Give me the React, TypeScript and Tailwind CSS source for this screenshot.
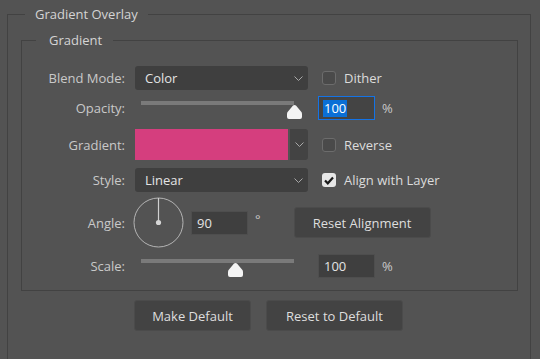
import React from 'react';

const font = { fontFamily: '"Open Sans", "Noto Sans", sans-serif' };

function Chevron() {
  return (
    <svg width="9" height="5" viewBox="0 0 9 5" className="shrink-0">
      <path d="M0.5 0.5 L4.5 4.5 L8.5 0.5" fill="none" stroke="#a8a8a8" strokeWidth="1" />
    </svg>
  );
}

function Thumb() {
  return (
    <svg width="15" height="14" viewBox="0 0 15 14">
      <path
        d="M7.5 0 C8.6 0 9.3 0.8 10 1.8 L14 6.6 Q15 7.6 15 9 L15 12 Q15 14 13 14 L2 14 Q0 14 0 12 L0 9 Q0 7.6 1 6.6 L5 1.8 C5.7 0.8 6.4 0 7.5 0Z"
        fill="#f4f4f4"
      />
    </svg>
  );
}

function Checkbox({ checked }: { checked?: boolean }) {
  return checked ? (
    <span className="flex h-[14px] w-[14px] items-center justify-center rounded-[3px] bg-[#e6e6e6]">
      <svg width="10" height="9" viewBox="0 0 10 9">
        <path d="M1 4.5 L3.8 7.3 L9 1.5" fill="none" stroke="#1a1a1a" strokeWidth="2.2" />
      </svg>
    </span>
  ) : (
    <span className="block h-[14px] w-[14px] rounded-[3px] border border-[#6c6c6c] bg-[#4a4a4a]" />
  );
}

function Label({ children }: { children: React.ReactNode }) {
  return <div className="w-[103px] shrink-0 text-right text-[#c9c9c9]">{children}</div>;
}

function Select({ value }: { value: string }) {
  return (
    <div className="flex h-[24px] w-[173px] items-center justify-between rounded-[3px] bg-[#3f3f3f] pl-[10px] pr-[5px] text-[#e4e4e4]">
      <span>{value}</span>
      <Chevron />
    </div>
  );
}

function Slider({ pos }: { pos: number }) {
  return (
    <div className="relative h-[24px] w-[173px]">
      <div className="ml-[6px] mt-[5px] h-[4px] w-[153px] bg-[#7a7a7a]" />
      <div className="absolute top-[9px]" style={{ left: pos - 7 }}>
        <Thumb />
      </div>
    </div>
  );
}

function NumBox({ value, focused }: { value: string; focused?: boolean }) {
  return (
    <div
      className={
        focused
          ? 'flex h-[24px] w-[57px] items-center border border-[#1473e6] bg-[#444444] pl-[4px]'
          : 'flex h-[24px] w-[57px] items-center border border-[#4e4e4e] bg-[#3f3f3f] pl-[5px]'
      }
    >
      <span className={focused ? 'bg-[#0a6fd6] px-[1px] leading-[17px] text-white' : 'text-[#e4e4e4]'}>{value}</span>
    </div>
  );
}

function Button({ children, w }: { children: React.ReactNode; w: string }) {
  return (
    <div
      className={`flex h-[31px] items-center justify-center rounded-[3px] border border-[#4b4b4b] bg-[#434343] text-[#dedede] ${w}`}
    >
      {children}
    </div>
  );
}

export default function App() {
  return (
    <div className="h-[359px] w-[540px] overflow-hidden bg-[#535353] text-[13px] leading-[18px]" style={font}>
      <fieldset className="ml-[7px] mt-[5px] h-[400px] w-[524px] border border-[#424242] pl-[13px] pt-[8px]">
        <legend className="ml-[4px] px-[10px] text-[#d4d4d4]">Gradient Overlay</legend>

        <fieldset className="w-[497px] border border-[#424242] pb-[12px] pt-[17px]">
          <legend className="ml-[14px] pl-[13px] pr-[11px] text-[#d4d4d4]">Gradient</legend>

          <div className="flex flex-col">
            <div className="flex h-[24px] items-center gap-[10px]">
              <Label>Blend Mode:</Label>
              <Select value="Color" />
              <div className="ml-[4px] flex items-center gap-[8px] text-[#dcdcdc]">
                <Checkbox />
                <span>Dither</span>
              </div>
            </div>

            <div className="mt-[6px] flex h-[24px] items-center gap-[10px]">
              <Label>Opacity:</Label>
              <Slider pos={159} />
              <NumBox value="100" focused />
              <span className="ml-[-3px] text-[#c9c9c9]">%</span>
            </div>

            <div className="mt-[9px] flex h-[31px] items-center gap-[10px]">
              <Label>Gradient:</Label>
              <div className="flex h-[31px] w-[173px] gap-[2px]">
                <div className="h-full w-[153px] bg-[#d53e7e]" />
                <div className="flex h-full w-[18px] items-center justify-center rounded-r-[3px] bg-[#434343]">
                  <Chevron />
                </div>
              </div>
              <div className="ml-[4px] flex items-center gap-[8px] text-[#dcdcdc]">
                <Checkbox />
                <span>Reverse</span>
              </div>
            </div>

            <div className="mt-[8px] flex h-[24px] items-center gap-[10px]">
              <Label>Style:</Label>
              <Select value="Linear" />
              <div className="ml-[4px] flex items-center gap-[8px] text-[#dcdcdc]">
                <Checkbox checked />
                <span>Align with Layer</span>
              </div>
            </div>

            <div className="mt-[5px] flex h-[51px] items-center">
              <Label>Angle:</Label>
              <svg width="51" height="51" viewBox="0 0 51 51" className="ml-[8px]">
                <circle cx="25.5" cy="25.5" r="24.5" fill="none" stroke="#b4b4b4" strokeWidth="1" />
                <line x1="25.5" y1="1" x2="25.5" y2="25" stroke="#d0d0d0" strokeWidth="1.2" />
                <circle cx="25.5" cy="25.5" r="2.6" fill="#d6d6d6" />
              </svg>
              <div className="ml-[7px]">
                <NumBox value="90" />
              </div>
              <span className="mb-[8px] ml-[7px] text-[#c9c9c9]">°</span>
              <div className="ml-[33px]">
                <Button w="w-[137px]">Reset Alignment</Button>
              </div>
            </div>

            <div className="mt-[6px] flex h-[24px] items-center gap-[10px]">
              <Label>Scale:</Label>
              <Slider pos={100} />
              <NumBox value="100" />
              <span className="ml-[-3px] text-[#c9c9c9]">%</span>
            </div>
          </div>
        </fieldset>

        <div className="ml-[113px] mt-[9px] flex gap-[15px]">
          <Button w="w-[117px]">Make Default</Button>
          <Button w="w-[137px]">Reset to Default</Button>
        </div>
      </fieldset>
    </div>
  );
}
